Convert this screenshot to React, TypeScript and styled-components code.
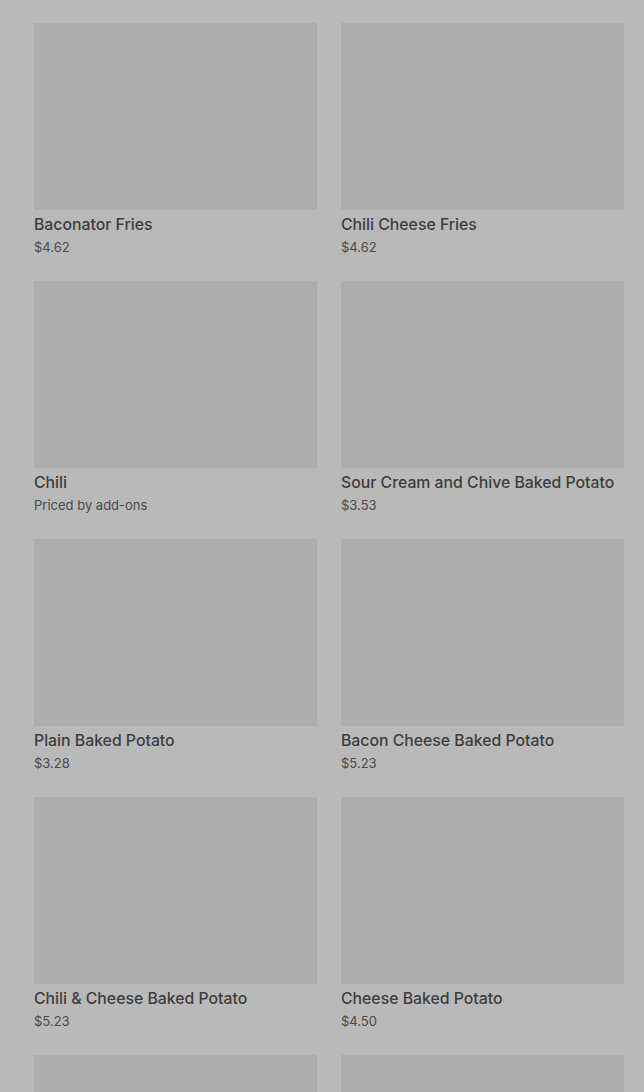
import React from "react";
import styled, { createGlobalStyle } from "styled-components";

const Global = createGlobalStyle`
  html, body {
    margin: 0;
    padding: 0;
    background: #b9b9b9;
    overflow: hidden;
  }
  body {
    font-family: Inter, Roboto, "Liberation Sans", Arial, sans-serif;
  }
`;

const Page = styled.div`
  background: #b9b9b9;
  height: 1092px;
  overflow: hidden;
  padding: 23px 20px 0 34px;
  box-sizing: border-box;
`;

const Grid = styled.div`
  display: grid;
  grid-template-columns: 283px 283px;
  column-gap: 24px;
  row-gap: 25px;
`;

const Card = styled.div`
  display: flex;
  flex-direction: column;
`;

const Thumb = styled.div`
  height: 187px;
  background: #adadad;
`;

const Title = styled.div`
  margin-top: 5px;
  font-size: 15.8px;
  line-height: 20px;
  font-weight: 500;
  color: #3d3d3d;
  white-space: nowrap;
`;

const Price = styled.div`
  margin-top: 3px;
  font-size: 13px;
  line-height: 18px;
  font-weight: 400;
  color: #4b4b4b;
`;

type Item = { name?: string; price?: string };

const items: Item[] = [
  { name: "Baconator Fries", price: "$4.62" },
  { name: "Chili Cheese Fries", price: "$4.62" },
  { name: "Chili", price: "Priced by add-ons" },
  { name: "Sour Cream and Chive Baked Potato", price: "$3.53" },
  { name: "Plain Baked Potato", price: "$3.28" },
  { name: "Bacon Cheese Baked Potato", price: "$5.23" },
  { name: "Chili & Cheese Baked Potato", price: "$5.23" },
  { name: "Cheese Baked Potato", price: "$4.50" },
  {},
  {},
];

export default function App() {
  return (
    <>
      <Global />
      <Page>
        <Grid>
          {items.map((it, i) => (
            <Card key={i}>
              <Thumb />
              {it.name && <Title>{it.name}</Title>}
              {it.price && <Price>{it.price}</Price>}
            </Card>
          ))}
        </Grid>
      </Page>
    </>
  );
}
